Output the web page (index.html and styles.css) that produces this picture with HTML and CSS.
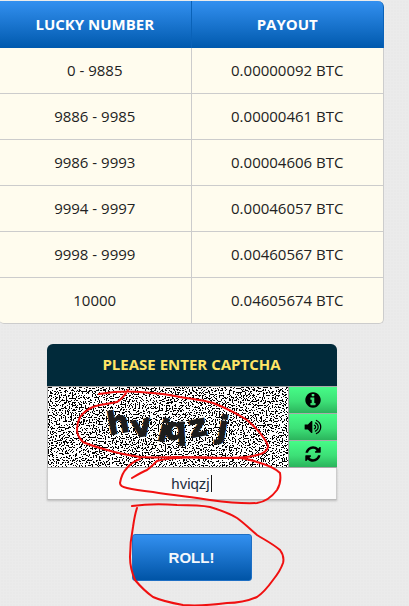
FILE: index.html
```html
<!DOCTYPE html>
<html>
<head lang="en">
<meta charset="UTF-8">
<title>Free BTC roll</title>
<link rel="stylesheet" href="styles.css">
</head>
<body>
  <div class="page">
    <table class="payouts">
      <thead>
        <tr><th>LUCKY NUMBER</th><th>PAYOUT</th></tr>
      </thead>
      <tbody>
        <tr><td>0 - 9885</td><td>0.00000092 BTC</td></tr>
        <tr><td>9886 - 9985</td><td>0.00000461 BTC</td></tr>
        <tr><td>9986 - 9993</td><td>0.00004606 BTC</td></tr>
        <tr><td>9994 - 9997</td><td>0.00046057 BTC</td></tr>
        <tr><td>9998 - 9999</td><td>0.00460567 BTC</td></tr>
        <tr><td>10000</td><td>0.04605674 BTC</td></tr>
      </tbody>
    </table>

    <div class="captcha">
      <div class="captcha-title">PLEASE ENTER CAPTCHA</div>
      <div class="captcha-body">
        <svg class="captcha-img" width="240" height="80" viewBox="0 0 240 80">
          <defs>
            <filter id="noise" x="0" y="0" width="100%" height="100%" color-interpolation-filters="sRGB">
              <feTurbulence type="fractalNoise" baseFrequency="0.7" numOctaves="1" seed="11"/>
              <feColorMatrix type="matrix" values="1 0 0 0 0  1 0 0 0 0  1 0 0 0 0  0 0 0 0 1"/>
              <feComponentTransfer>
                <feFuncR type="discrete" tableValues="0 0 0 0 1 1 1 1 1"/>
                <feFuncG type="discrete" tableValues="0 0 0 0 1 1 1 1 1"/>
                <feFuncB type="discrete" tableValues="0 0 0 0 1 1 1 1 1"/>
              </feComponentTransfer>
            </filter>
          </defs>
          <rect width="240" height="80" filter="url(#noise)"/>
          <g class="captcha-letters">
            <text transform="translate(61 48) rotate(-10)">h</text>
            <text transform="translate(85 51) rotate(-10)">v</text>
            <text transform="translate(108 53) rotate(14)">i</text>
            <text transform="translate(117 53) rotate(-3)">q</text>
            <text transform="translate(143 51) rotate(-12)">z</text>
            <text transform="translate(168 50) rotate(10)">j</text>
          </g>
        </svg>
        <div class="captcha-btns">
          <div class="captcha-btn">
            <svg width="18" height="18" viewBox="0 0 1792 1792"><path d="M1152 1376v-160q0-14-9-23t-23-9h-96v-512q0-14-9-23t-23-9h-320q-14 0-23 9t-9 23v160q0 14 9 23t23 9h96v320h-96q-14 0-23 9t-9 23v160q0 14 9 23t23 9h448q14 0 23-9t9-23zm-128-896v-160q0-14-9-23t-23-9h-192q-14 0-23 9t-9 23v160q0 14 9 23t23 9h192q14 0 23-9t9-23zm640 416q0 209-103 385.5t-279.5 279.5-385.5 103-385.5-103-279.5-279.5-103-385.5 103-385.5 279.5-279.5 385.5-103 385.5 103 279.5 279.5 103 385.5z"/></svg>
          </div>
          <div class="captcha-btn">
            <svg width="18" height="18" viewBox="0 0 1792 1792"><path d="M832 352v1088q0 26-19 45t-45 19-45-19l-333-333h-262q-26 0-45-19t-19-45v-384q0-26 19-45t45-19h262l333-333q19-19 45-19t45 19 19 45zm384 544q0 76-42.5 141.5t-112.5 93.5q-10 5-25 5-26 0-45-18.5t-19-45.5q0-21 12-35.5t29-25 34-23 29-36 12-56.5-12-56.5-29-36-34-23-29-25-12-35.5q0-27 19-45.5t45-18.5q15 0 25 5 70 27 112.5 93t42.5 142zm256 0q0 153-85 282.5t-225 188.5q-13 5-25 5-27 0-46-19t-19-45q0-39 39-59 56-29 76-44 74-54 115.5-135.5t41.5-173.5-41.5-173.5-115.5-135.5q-20-15-76-44-39-20-39-59 0-26 19-45t45-19q13 0 26 5 140 59 225 188.5t85 282.5zm256 0q0 230-127 422.5t-338 283.5q-13 5-26 5-26 0-45-19t-19-45q0-36 39-59 7-4 22.5-10.5t22.5-10.5q46-25 82-51 123-91 192-227t69-289-69-289-192-227q-36-26-82-51-7-4-22.5-10.5t-22.5-10.5q-39-23-39-59 0-26 19-45t45-19q13 0 26 5 211 91 338 283.5t127 422.5z"/></svg>
          </div>
          <div class="captcha-btn">
            <svg width="18" height="18" viewBox="0 0 1792 1792"><path d="M1639 1056q0 5-1 7-64 268-268 434.5t-478 166.5q-146 0-282.5-55t-243.5-157l-129 129q-19 19-45 19t-45-19-19-45v-448q0-26 19-45t45-19h448q26 0 45 19t19 45-19 45l-137 137q71 66 161 102t187 36q134 0 250-65t186-179q11-17 53-117 8-23 30-23h192q13 0 22.5 9.5t9.5 22.5zm25-800v448q0 26-19 45t-45 19h-448q-26 0-45-19t-19-45 19-45l138-138q-148-137-349-137-134 0-250 65t-186 179q-11 17-53 117-8 23-30 23h-199q-13 0-22.5-9.5t-9.5-22.5v-7q65-268 270-434.5t480-166.5q146 0 284 55.5t245 156.5l130-129q19-19 45-19t45 19 19 45z"/></svg>
          </div>
        </div>
      </div>
      <div class="captcha-input">hviqzj<span class="caret"></span></div>
    </div>

    <button class="roll" type="button">ROLL!</button>
  </div>

  <!-- red pen marks drawn over the screenshot -->
  <svg class="scribble" width="409" height="606" viewBox="0 0 409 606">
    <path d="M99 394C112 392 126 391 140 392C155 393 167 394 180 397C192 399 203 400 213 403C226 408 236 413 247 420C254 426 259 431 263 437C266 441 268 444 268 447C267 451 263 454 257 455C247 458 237 458 227 458C210 458 194 457 177 457C164 457 152 458 140 457C128 455 117 453 107 450C97 447 89 445 83 442C79 438 77 434 77 430C77 425 78 421 80 417C84 412 88 409 93 407C101 404 109 404 117 402C122 399 125 395 128 390"/>
    <path d="M132 478C137 475 142 472 147 470C151 467 154 464 157 461C172 457 190 457 240 458C247 459 252 460 257 462C268 465 276 469 280 473C281 479 280 485 277 490C271 498 264 502 257 503C240 504 225 502 210 500C190 497 172 495 153 492C144 491 135 490 127 488C122 487 120 485 120 483C121 477 123 472 127 468C130 464 135 461 140 459"/>
    <path d="M132 506C147 504 162 504 177 505C189 505 200 505 210 507C220 510 229 513 237 518C244 523 250 529 257 535C265 540 273 544 280 550C283 554 284 559 283 563C281 569 277 575 273 580C268 587 263 593 257 597C248 601 238 603 227 603C212 605 197 606 183 605C172 603 162 601 153 597C146 592 140 586 135 580C132 573 130 565 130 557C130 547 131 537 133 527C134 520 135 514 137 508"/>
  </svg>
</body>
</html>
```

FILE: styles.css
```css
html, body { margin: 0; padding: 0; height: 100%; overflow: hidden; }
body {
  background-color: #e9e9e9;
  background-image: linear-gradient(#ebebeb 1px, transparent 1px), linear-gradient(90deg, #ebebeb 1px, transparent 1px);
  background-size: 3px 3px;
  color: #222;
  font-family: "Open Sans", Arial, sans-serif;
  font-size: 15px;
}
.page {
  width: 385px;
  margin-left: -1px;
  padding-top: 1px;
  display: flex;
  flex-direction: column;
  align-items: center;
}

.payouts {
  width: 385px;
  table-layout: fixed;
  border-collapse: separate;
  border-spacing: 0;
}
.payouts th, .payouts td {
  width: 50%;
  text-align: center;
  padding: 0 0 2px;
  border-right: 1px solid #ccc;
}
.payouts th {
  height: 45px;
  color: #fff;
  font-size: 15px;
  font-weight: 700;
  background: linear-gradient(#3390f0, #0059ad);
  border-right-color: #0a62b8;
}
.payouts th:last-child { border-top-right-radius: 6px; }
.payouts td {
  height: 43px;
  background: #fffcee;
  border-bottom: 1px solid #ccc;
}
.payouts tr:last-child td:first-child { border-bottom-left-radius: 5px; }
.payouts tr:last-child td:last-child { border-bottom-right-radius: 5px; }

.captcha {
  width: 290px;
  margin-top: 20px;
  border-radius: 6px 6px 0 0;
  background: #ccc;
}
.captcha-title {
  height: 42px;
  line-height: 41px;
  text-align: center;
  color: #ffe566;
  background: #012a3a;
  font-size: 15px;
  font-weight: 700;
  border-radius: 6px 6px 0 0;
}
.captcha-body {
  display: flex;
  gap: 1px;
  padding: 1px 0 1px 1px;
  background: #aaa;
}
.captcha-img { display: block; flex: none; }
.captcha-letters text {
  font-family: "DejaVu Sans", sans-serif;
  font-size: 31px;
  font-weight: 700;
  fill: #1c1c1c;
  stroke: #1c1c1c;
  stroke-width: 1;
}
.captcha-btns {
  flex: 1;
  display: flex;
  flex-direction: column;
  gap: 1px;
}
.captcha-btn {
  flex: 1;
  display: flex;
  align-items: center;
  justify-content: center;
  background: linear-gradient(#46fc87, #3de077 55%, #2bb45c);
}
.captcha-input {
  height: 31px;
  line-height: 31px;
  text-align: center;
  color: #1c2c3c;
  background: #fafafa;
  border-bottom: 1px solid #bbb;
  border-left: 1px solid #ccc;
  border-right: 1px solid #ccc;
  box-shadow: 0 1px 2px rgba(0, 0, 0, 0.2);
  font-family: "Liberation Sans", Arial, sans-serif;
  font-size: 15px;
}
.caret {
  display: inline-block;
  width: 1px;
  height: 17px;
  margin-left: 1px;
  background: #111;
  vertical-align: -3px;
}

.roll {
  width: 120px;
  height: 47px;
  margin-top: 34px;
  padding: 0;
  color: #f4f8fc;
  background: linear-gradient(#3390f0, #0054a6);
  border: 1px solid #1e6fc4;
  border-radius: 3px;
  font-family: "Liberation Sans", Arial, sans-serif;
  font-size: 15px;
  font-weight: 700;
}

.scribble { position: absolute; left: 0; top: 0; pointer-events: none; }
.scribble path { fill: none; stroke: #f01010; stroke-width: 2; stroke-linecap: round; }
```
